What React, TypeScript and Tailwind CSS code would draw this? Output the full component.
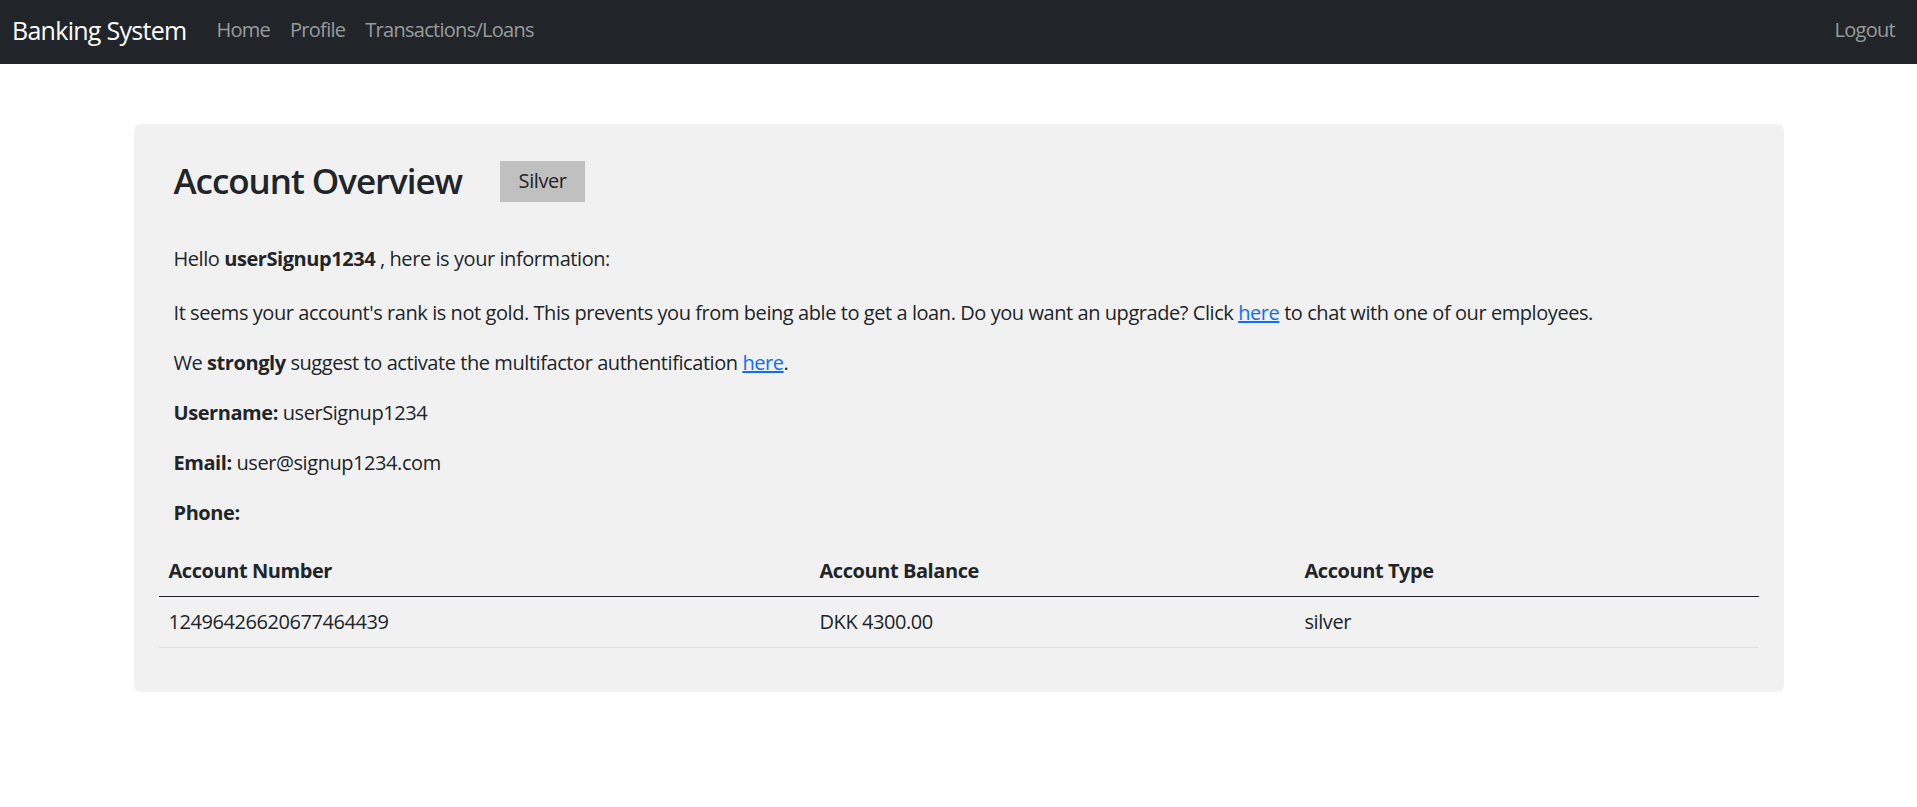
import React from "react";

export default function App() {
  const font = { fontFamily: '"Open Sans", "Noto Sans", sans-serif' };
  return (
    <div className="min-h-screen bg-white tracking-[-0.027em] text-[#212529]" style={font}>
      <nav className="flex h-[64px] items-center justify-between bg-[#212529] px-[12px] pb-[4px] tracking-[-0.045em]">
        <div className="flex items-center">
          <a className="mr-[20px] text-[25px] leading-[37px] text-white">Banking System</a>
          <a className="px-[10px] text-[20px] text-[rgba(255,255,255,0.55)]">Home</a>
          <a className="px-[10px] text-[20px] text-[rgba(255,255,255,0.55)]">Profile</a>
          <a className="px-[10px] text-[20px] text-[rgba(255,255,255,0.55)]">Transactions/Loans</a>
        </div>
        <a className="px-[10px] text-[20px] text-[rgba(255,255,255,0.55)]">Logout</a>
      </nav>

      <main className="mx-auto mt-[60px] w-[1650px] rounded-[7px] bg-[#f1f1f1] px-[25px] pb-[24px] pt-[36px]">
        <div className="px-[15px]">
          <div className="flex items-center">
            <h3 className="text-[35px] font-semibold leading-[42px] tracking-[-0.03em]">Account Overview</h3>
            <span className="ml-[38px] flex h-[41px] w-[85px] items-center justify-center bg-[#c0c0c0] text-[20px]">
              Silver
            </span>
          </div>
          <div className="mt-[42px] text-[20px] leading-[30px]">
            <p className="mb-[24px]">
              Hello <strong>userSignup1234</strong> , here is your information:
            </p>
            <p className="mb-[20px]">
              It seems your account's rank is not gold. This prevents you from being able to get a loan. Do you want an
              upgrade? Click <a className="text-[#0d6efd] underline">here</a> to chat with one of our employees.
            </p>
            <p className="mb-[20px]">
              We <strong>strongly</strong> suggest to activate the multifactor authentification{" "}
              <a className="text-[#0d6efd] underline">here</a>.
            </p>
            <p className="mb-[20px]">
              <strong>Username:</strong> userSignup1234
            </p>
            <p className="mb-[20px]">
              <strong>Email:</strong> user@signup1234.com
            </p>
            <p className="mb-[18px]">
              <strong>Phone:</strong>
            </p>
          </div>
        </div>
        <table className="mb-[20px] w-full table-fixed border-collapse text-left text-[20px] leading-[30px]">
          <thead>
            <tr className="border-b border-[#212529]">
              <th className="w-[651px] px-[10px] py-[10px] font-bold">Account Number</th>
              <th className="w-[485px] px-[10px] py-[10px] font-bold">Account Balance</th>
              <th className="px-[10px] py-[10px] font-bold">Account Type</th>
            </tr>
          </thead>
          <tbody>
            <tr className="border-b border-[#dee2e6]">
              <td className="px-[10px] py-[10px]">12496426620677464439</td>
              <td className="px-[10px] py-[10px]">DKK 4300.00</td>
              <td className="px-[10px] py-[10px]">silver</td>
            </tr>
          </tbody>
        </table>
      </main>
    </div>
  );
}
